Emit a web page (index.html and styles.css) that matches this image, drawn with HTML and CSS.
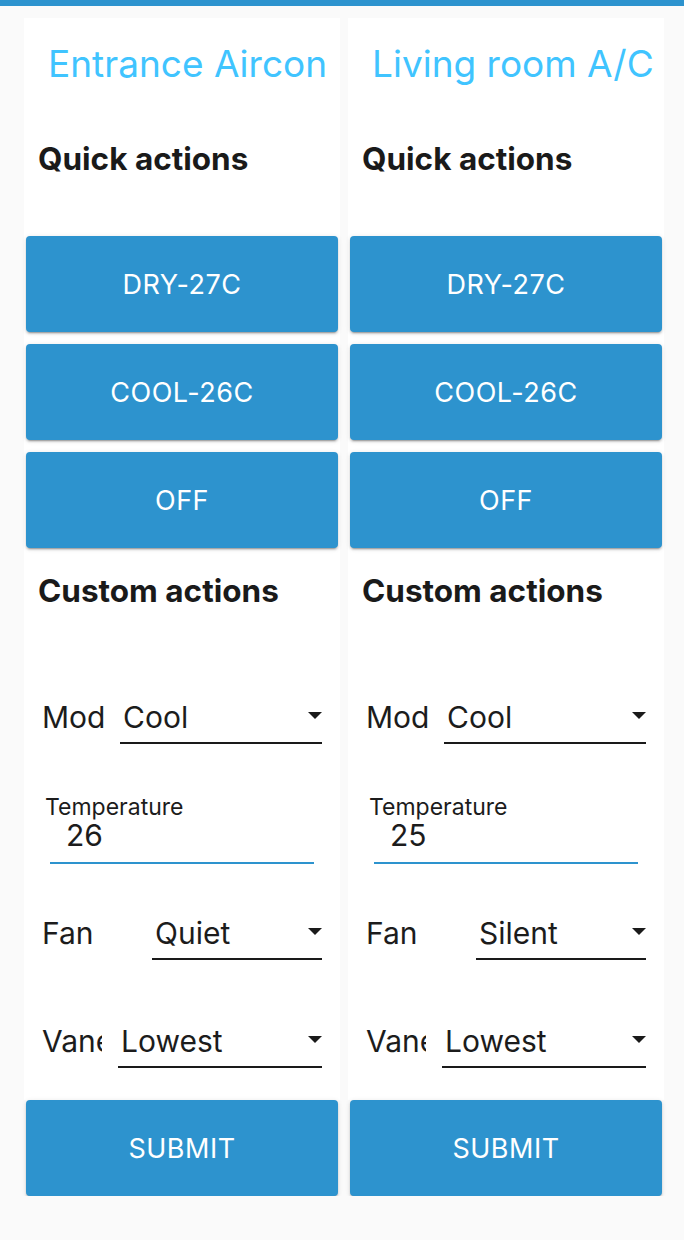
FILE: index.html
```html
<!DOCTYPE html>
<html lang="en">
<head>
<meta charset="utf-8">
<title>Aircon control</title>
<link rel="stylesheet" href="styles.css">
</head>
<body>
<div class="topbar"></div>
<main class="units">
  <section class="unit">
    <div class="card">
      <h1 class="title">Entrance Aircon</h1>
      <h2 class="heading">Quick actions</h2>
      <div class="quick">
        <button class="btn">DRY-27C</button>
        <button class="btn">COOL-26C</button>
        <button class="btn">OFF</button>
      </div>
      <h2 class="heading heading-custom">Custom actions</h2>
      <div class="row row-mod">
        <span class="label">Mod</span>
        <div class="select"><span class="value">Cool</span><span class="caret"></span></div>
      </div>
      <div class="textfield">
        <span class="tf-label">Temperature</span>
        <span class="tf-value">26</span>
      </div>
      <div class="row row-fan">
        <span class="label">Fan</span>
        <div class="select"><span class="value">Quiet</span><span class="caret"></span></div>
      </div>
      <div class="row row-vane">
        <span class="label">Vane</span>
        <div class="select"><span class="value">Lowest</span><span class="caret"></span></div>
      </div>
    </div>
    <button class="btn submit">SUBMIT</button>
  </section>
  <section class="unit">
    <div class="card">
      <h1 class="title">Living room A/C</h1>
      <h2 class="heading">Quick actions</h2>
      <div class="quick">
        <button class="btn">DRY-27C</button>
        <button class="btn">COOL-26C</button>
        <button class="btn">OFF</button>
      </div>
      <h2 class="heading heading-custom">Custom actions</h2>
      <div class="row row-mod">
        <span class="label">Mod</span>
        <div class="select"><span class="value">Cool</span><span class="caret"></span></div>
      </div>
      <div class="textfield">
        <span class="tf-label">Temperature</span>
        <span class="tf-value">25</span>
      </div>
      <div class="row row-fan">
        <span class="label">Fan</span>
        <div class="select"><span class="value">Silent</span><span class="caret"></span></div>
      </div>
      <div class="row row-vane">
        <span class="label">Vane</span>
        <div class="select"><span class="value">Lowest</span><span class="caret"></span></div>
      </div>
    </div>
    <button class="btn submit">SUBMIT</button>
  </section>
</main>
</body>
</html>
```
FILE: styles.css
```css
* { box-sizing: border-box; }
html, body {
  margin: 0;
  padding: 0;
  background: #fafafa;
  font-family: Inter, "Noto Sans", sans-serif;
  color: #1c1c1c;
}
.topbar {
  height: 6px;
  background: #2d93ce;
}
.units {
  display: grid;
  grid-template-columns: 316px 316px;
  column-gap: 8px;
  padding: 12px 0 0 24px;
}
.unit {
  display: flex;
  flex-direction: column;
}
.card {
  background: #ffffff;
  padding: 24px 2px 32px;
  display: flex;
  flex-direction: column;
}
.title {
  margin: 0 0 0 22px;
  font-size: 37px;
  line-height: 44px;
  font-weight: 400;
  color: #40c4ff;
  white-space: nowrap;
}
.heading {
  margin: 54px 0 0 12px;
  font-size: 31.5px;
  line-height: 38px;
  font-weight: 700;
  color: #1a1a1a;
}
.heading-custom {
  margin-top: 24px;
}
.quick {
  margin-top: 58px;
  display: flex;
  flex-direction: column;
  gap: 12px;
}
.btn {
  display: flex;
  align-items: center;
  justify-content: center;
  height: 96px;
  width: 100%;
  border: 0;
  border-radius: 4px;
  background: #2d93ce;
  color: #ffffff;
  font-family: Inter, "Noto Sans", sans-serif;
  font-size: 27px;
  font-weight: 400;
  letter-spacing: 0.5px;
  box-shadow: 0 3px 1px -2px rgba(0,0,0,.2), 0 2px 2px 0 rgba(0,0,0,.14), 0 1px 5px 0 rgba(0,0,0,.12);
  padding: 0;
}
.submit {
  margin: 0 2px;
  width: auto;
}
.row {
  display: flex;
  align-items: flex-start;
  margin: 0 16px 0 16px;
  font-size: 30px;
  line-height: 36px;
}
.row-mod { margin-top: 89px; }
.row-fan { margin-top: 51px; }
.row-vane { margin-top: 63px; }
.label {
  flex: none;
  overflow: hidden;
  white-space: nowrap;
  margin-right: 16px;
  color: #1c1c1c;
}
.row-mod .label { width: 64px; margin-right: 14px; }
.row-fan .label { width: 94px; }
.row-vane .label { width: 60px; }
.select {
  flex: 1;
  display: flex;
  align-items: flex-start;
  justify-content: space-between;
  padding: 0 0 7px 3px;
  border-bottom: 2px solid #1a1a1a;
}
.value {
  color: #1c1c1c;
}
.caret {
  width: 0;
  height: 0;
  margin-top: 13px;
  border-left: 7px solid transparent;
  border-right: 7px solid transparent;
  border-top: 7px solid #1a1a1a;
}
.textfield {
  display: flex;
  flex-direction: column;
  margin: 51px 24px 0 24px;
  border-bottom: 2px solid #2d93ce;
  padding-bottom: 11px;
}
.tf-label {
  font-size: 23px;
  line-height: 24px;
  margin-left: -5px;
  color: #1c1c1c;
}
.tf-value {
  font-size: 30px;
  line-height: 32px;
  padding-left: 16px;
  color: #1c1c1c;
}
```
